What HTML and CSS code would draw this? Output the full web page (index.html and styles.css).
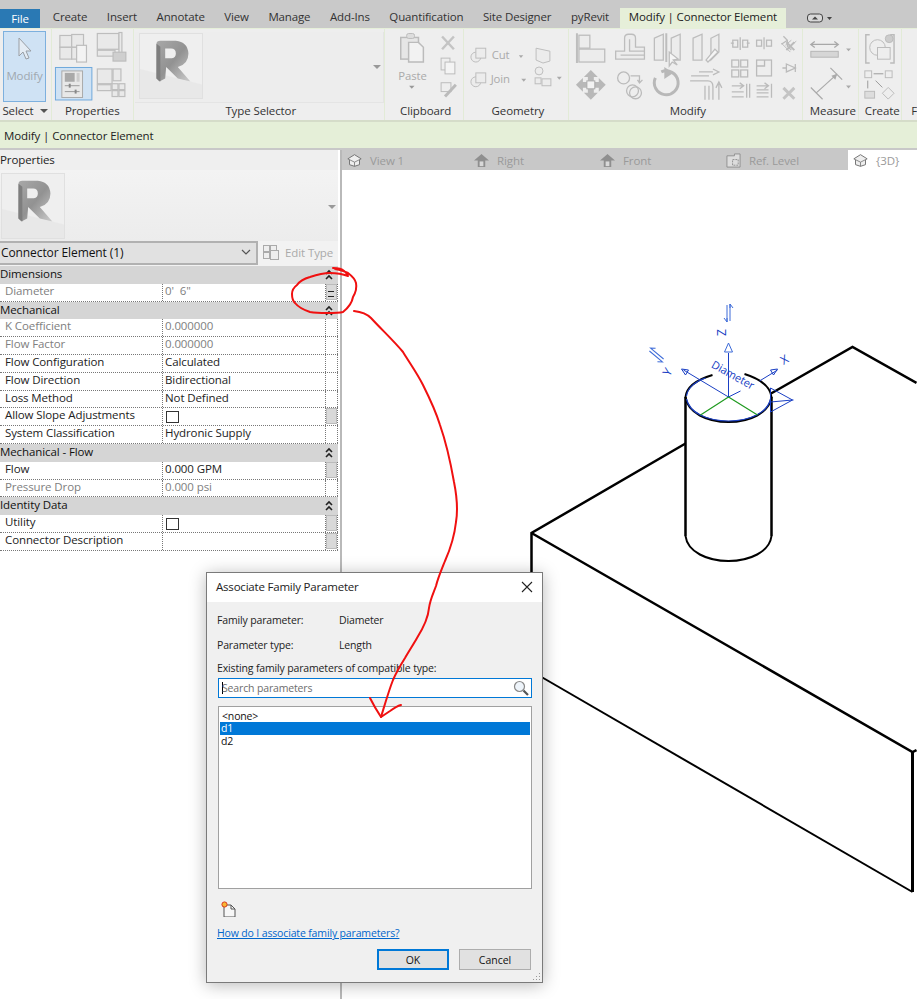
FILE: index.html
```html
<!DOCTYPE html>
<html lang="en">
<head>
<meta charset="utf-8">
<title>Modify | Connector Element</title>
<link rel="stylesheet" href="styles.css">
</head>
<body>
<svg class="defs" width="0" height="0" aria-hidden="true">
  <defs>
    <linearGradient id="rg" x1="0" y1="0" x2="1" y2="1">
      <stop offset="0" stop-color="#a8a8a8"/><stop offset=".5" stop-color="#929292"/><stop offset="1" stop-color="#cdcdcd"/>
    </linearGradient>
    <symbol id="rlogo" viewBox="0 0 64 66">
      <path d="M0 36 L64 52 V66 H0Z" fill="#e6e6e6" opacity=".7"/>
      <path fill="url(#rg)" fill-rule="evenodd" d="M17 10Q17 7 21 7H37Q49 8 50 20Q50 31 39 34L52 49L39 46L27 34L26 46L20 49L17 46ZM26 15V25H33Q37 24 37 20Q37 15 32 15Z"/>
      <path d="M17 10L21 13V49L17 46Z" fill="#7e7e7e"/>
    </symbol>
    <symbol id="chev" viewBox="0 0 10 12">
      <path d="M2 5L5 2L8 5M2 10L5 7L8 10" fill="none" stroke="#222" stroke-width="1.6"/>
    </symbol>
    <symbol id="home" viewBox="0 0 16 16">
      <path d="M0 8L8 1L16 8H12V15H4V8Z" fill="#8f8f8f"/><rect x="6" y="9" width="4" height="5" fill="#d8d8d8"/>
    </symbol>
    <symbol id="house3d" viewBox="0 0 18 16">
      <path d="M1 6L9 1L17 6L15 7V13L9 15L3 13V7Z" fill="#eee" stroke="#777" stroke-width="1.2"/><path d="M3 7L9 10L15 7M9 10V15" fill="none" stroke="#777"/>
    </symbol>
    <path id="dblarrow" d="M-9 -1.500H8M-8 1.500H9M-5 -4.500L-9 -1.500L-5 -1.500M5 1.500L9 1.500L5 4.500" fill="none"/>
  </defs>
</svg>

<div class="app">
  <nav class="tabs">
    <span class="tab-file">File</span>
    <span class="tab">Create</span>
    <span class="tab">Insert</span>
    <span class="tab">Annotate</span>
    <span class="tab">View</span>
    <span class="tab">Manage</span>
    <span class="tab">Add-Ins</span>
    <span class="tab">Quantification</span>
    <span class="tab">Site Designer</span>
    <span class="tab">pyRevit</span>
    <span class="tab-active">Modify | Connector Element</span>
    <svg class="tab-toggle" viewBox="0 0 26 10" width="26" height="10">
      <rect x=".5" y="1" width="15" height="8" rx="3" fill="#d8d8d8" stroke="#444"/><path d="M5 6.5L8 3.5L11 6.5Z" fill="#444"/><path d="M20 4H25L22.500 7Z" fill="#444"/>
    </svg>
  </nav>

  <section class="ribbon">
    <div class="panel panel-select">
      <div class="panel-body">
        <div class="modify-btn">
          <svg viewBox="0 0 16 24" width="16" height="24"><path d="M2 1V19L6 15L9 22L12 21L9 14H14Z" fill="#e4ecf4" stroke="#9a9fa5"/></svg>
          <span>Modify</span>
        </div>
      </div>
      <div class="panel-label">Select <i class="caret"></i></div>
    </div>

    <div class="panel panel-props">
      <div class="panel-body">
        <svg class="fill-svg" viewBox="52 29 82 74">
          <g fill="#e9e9e9" stroke="#bdbdbd" stroke-width="1.200">
            <rect x="60" y="35" width="12" height="12"/><rect x="72" y="34" width="12" height="13"/><rect x="60" y="47" width="12" height="12"/><rect x="72" y="47" width="9" height="12"/>
            <rect x="77" y="45" width="10" height="17" fill="#f3f3f3"/>
            <rect x="98" y="33" width="22" height="16"/><rect x="120" y="32" width="3" height="24"/><rect x="98" y="50" width="18" height="6"/><rect x="114" y="52" width="13" height="9" fill="#cfcfcf"/>
            <rect x="98" y="69" width="15" height="15"/><rect x="114" y="69" width="8" height="12"/><rect x="98" y="85" width="14" height="6"/>
            <rect x="113" y="84" width="6" height="6"/><rect x="120" y="84" width="6" height="6"/><rect x="113" y="91" width="6" height="6"/><rect x="120" y="91" width="6" height="6"/>
          </g>
          <rect x="55.500" y="67.500" width="37" height="33" fill="#cfe2f4" stroke="#6ea8dc"/>
          <rect x="62" y="71" width="21" height="27" fill="#e8e8e8" stroke="#aaa"/>
          <rect x="65" y="73" width="10" height="9" fill="#a9a9a9"/><rect x="77" y="73" width="3" height="9" fill="#ccc"/>
          <path d="M65 86H80M65 92H80" stroke="#9a9a9a"/><rect x="69" y="84" width="2" height="4" fill="#888"/><rect x="75" y="90" width="2" height="4" fill="#888"/>
        </svg>
      </div>
      <div class="panel-label">Properties</div>
    </div>

    <div class="panel panel-type">
      <div class="panel-body type-box">
        <svg class="rbox" viewBox="0 0 64 66"><use href="#rlogo"/></svg>
        <i class="caret caret-light"></i>
      </div>
      <div class="panel-label label-shift">Type Selector</div>
    </div>

    <div class="panel panel-clip">
      <div class="panel-body">
        <svg class="fill-svg" viewBox="386 29 79 74">
          <rect x="402" y="37" width="18" height="22" fill="#e6e6e6" stroke="#bbb" stroke-width="1.500"/>
          <rect x="408" y="33" width="8" height="5" rx="2" fill="#ddd" stroke="#bbb"/>
          <path d="M410 42H420L425 47V62H410Z" fill="#f2f2f2" stroke="#bbb" stroke-width="1.500"/>
          <text class="dim-text" x="414" y="80" text-anchor="middle">Paste</text>
          <path d="M410.500 86H416L413.200 89Z" fill="#999"/>
          <path d="M444 36L456 49M456 36L444 49" stroke="#c4c4c4" stroke-width="2.500"/>
          <rect x="443" y="58" width="9" height="12" fill="#eee" stroke="#bbb"/><rect x="447" y="62" width="10" height="12" fill="#f4f4f4" stroke="#bbb"/>
          <rect x="443" y="83" width="10" height="9" fill="#eee" stroke="#bbb"/><path d="M447 97L458 85" stroke="#bbb" stroke-width="3"/>
        </svg>
      </div>
      <div class="panel-label label-shift">Clipboard</div>
    </div>

    <div class="panel panel-geo">
      <div class="panel-body">
        <svg class="fill-svg" viewBox="465 29 106 74">
          <g fill="#ececec" stroke="#bdbdbd">
            <circle cx="477" cy="57" r="5"/><rect x="477" y="48" width="10" height="10"/>
            <path d="M538 48L552 51V61L545 63L538 60Z"/>
            <circle cx="477" cy="82" r="5"/><rect x="477" y="73" width="10" height="10"/>
            <circle cx="541" cy="71" r="4"/><rect x="537" y="78" width="6" height="6"/><rect x="544" y="79" width="9" height="7"/>
          </g>
          <text class="dim-text" x="493" y="59">Cut</text><text class="dim-text" x="492" y="83">Join</text>
          <path d="M520.500 55H525L522.700 58ZM523 79H528L525.500 82ZM559 77H564L561.500 80Z" fill="#aaa"/>
        </svg>
      </div>
      <div class="panel-label label-shift">Geometry</div>
    </div>

    <div class="panel panel-mod">
      <div class="panel-body">
        <svg class="fill-svg" viewBox="571 29 235 74">
          <g fill="#ececec" stroke="#bdbdbd" stroke-width="1.300">
            <path d="M579 33V63" stroke-width="2"/><rect x="581" y="35" width="11" height="13"/><rect x="581" y="49" width="26" height="13"/>
            <path d="M618 59V51H627V38Q627 34 631 34H634Q638 34 638 38V47H647V59Z"/><path d="M623 55H647M632 39V51H647" fill="none"/>
            <path d="M657 38L666 34V60H657ZM674 38L683 34V60H674Z"/>
            <path d="M696 38L705 34V60H696ZM714 38L722 34V52L714 60Z"/>
            <path d="M669 33V62" stroke-width="2"/><path d="M672 52V66L675 62L680 65L676 60L681 59Z" fill="#f5f5f5"/>
            <path d="M709 60L718 49L721 52L711 62Z" fill="#f5f5f5"/>
          </g>
          <g fill="#b8b8b8">
            <path d="M593 70L600 77H596V82H590V77H586Z"/><path d="M593 100L600 93H596V88H590V93H586Z"/>
            <path d="M578 85L585 78V82H590V88H585V92Z"/><path d="M608 85L601 78V82H596V88H601V92Z"/>
          </g>
          <rect x="589" y="81" width="8" height="8" fill="#f2f2f2" stroke="#aaa"/>
          <g fill="none" stroke="#bbb" stroke-width="1.300">
            <circle cx="626" cy="78" r="6"/><circle cx="635" cy="91" r="6"/><circle cx="638" cy="93" r="6"/>
            <path d="M633 76H642V82M640 80L642 83L645 80"/>
            <rect x="736" y="40" width="5" height="7"/><rect x="746" y="40" width="5" height="7"/><path d="M743.500 37V50M734 43H737M750 43H753"/>
            <rect x="760" y="40" width="5" height="6"/><rect x="770" y="40" width="5" height="6"/><path d="M767.500 37V49"/>
            <path d="M787 36L791 40V46L795 50M785 44L791 40"/>
            <rect x="735" y="60" width="7" height="7"/><rect x="744" y="60" width="7" height="7"/><rect x="735" y="70" width="7" height="7"/><rect x="744" y="70" width="7" height="7"/>
            <rect x="760" y="60" width="15" height="16"/><path d="M760 66H768V60"/>
            <path d="M786 68H790M790 64L799 68L790 72ZM799 64V72"/>
            <path d="M735 86H747M743 83L747 86L743 89M735 92H747M735 97H747M750 84V98M753 84V98"/>
            <path d="M760 86H772M768 83L772 86L768 89M760 90H772M760 93H772M760 97H772M775 84V98"/>
          </g>
          <path d="M664 72A12 12 0 1 1 658 78" fill="none" stroke="#b8b8b8" stroke-width="3"/>
          <path d="M667 67L676 73L667 79Z" fill="#b8b8b8"/>
          <path d="M694 76H712M702 72H716M716 69L722 72L716 75M693 81H711Q716 81 716 87V100M708 86V100M712 86V100" fill="none" stroke="#bbb" stroke-width="1.300"/>
          <path d="M722 100V84M719 88L722 82L725 88" fill="none" stroke="#bbb" stroke-width="1.300"/>
          <path d="M785 43L794 52M789 45L795 40M792 47L800 41" fill="none" stroke="#bbb"/>
          <path d="M790 50L798 58M798 50L790 58" transform="translate(0 -8)" stroke="#bbb" stroke-width="2"/>
          <path d="M787 88L798 99M798 88L787 99" stroke="#c4c4c4" stroke-width="3"/>
        </svg>
      </div>
      <div class="panel-label label-shift">Modify</div>
    </div>

    <div class="panel panel-measure">
      <div class="panel-body">
        <svg class="fill-svg" viewBox="806 29 56 74">
          <path d="M814 44H842M818 41L814 44L818 47M838 41L842 44L838 47" fill="none" stroke="#a8a8a8" stroke-width="1.300"/>
          <rect x="814" y="51" width="28" height="6" fill="#d6d6d6" stroke="#b5b5b5"/>
          <path d="M850 48H855L852.500 51ZM850 86H855L852.500 89Z" fill="#aaa"/>
          <path d="M819 94L841 74M814 88L826 100M834 68L846 80" fill="none" stroke="#aaa" stroke-width="1.200"/>
          <path d="M841 74L835 76L839 80Z" fill="#aaa"/>
        </svg>
      </div>
      <div class="panel-label label-shift">Measure</div>
    </div>

    <div class="panel panel-create">
      <div class="panel-body">
        <svg class="fill-svg" viewBox="862 29 43 74">
          <g fill="#eee" stroke="#bbb">
            <path d="M873 34H869V63H873M894 34H898V63H894" fill="none" stroke-width="1.500"/>
            <circle cx="881" cy="47" r="8"/><rect x="881" y="47" width="13" height="12"/>
            <circle cx="893" cy="38" r="4" fill="#ccc"/>
            <rect x="868" y="71" width="7" height="7"/><rect x="889" y="71" width="7" height="7"/>
            <rect x="868" y="92" width="10" height="7" fill="#ddd"/><path d="M892 88L898 94L892 100L886 94Z"/>
          </g>
          <path d="M877 74H887M871 81V89M879 81L886 88" fill="none" stroke="#999"/>
        </svg>
      </div>
      <div class="panel-label label-shift">Create</div>
    </div>
    <div class="panel panel-end"><div class="panel-body"></div><div class="panel-label">F</div></div>
  </section>

  <div class="contextbar">Modify | Connector Element</div>

  <main class="workspace">
    <aside class="props">
      <div class="props-title">Properties</div>
      <div class="props-preview">
        <svg class="rbox" viewBox="0 0 64 66"><use href="#rlogo"/></svg>
        <i class="caret caret-light"></i>
      </div>
      <div class="props-picker">
        <div class="picker">
          <span>Connector Element (1)</span>
          <svg viewBox="0 0 10 6" width="10" height="6"><path d="M1 1L5 5L9 1" fill="none" stroke="#555" stroke-width="1.200"/></svg>
        </div>
        <div class="edit-type">
          <svg viewBox="0 0 16 16" width="16" height="16"><g fill="#eee" stroke="#aaa"><rect x=".5" y="1.500" width="6" height="6"/><rect x="7.500" y="1.500" width="6" height="6"/><rect x=".5" y="8.500" width="6" height="6"/><rect x="7.500" y="6.500" width="8" height="9"/></g></svg>
          <span>Edit Type</span>
        </div>
      </div>
      <div class="grid">
        <div class="group">Dimensions<svg class="chev"><use href="#chev"/></svg></div>
        <div class="row dim"><span>Diameter</span><span>0'&nbsp; 6"</span><span class="cell-btn"><b class="btn btn-eq"></b></span></div>
        <div class="group">Mechanical<svg class="chev"><use href="#chev"/></svg></div>
        <div class="row dim"><span>K Coefficient</span><span>0.000000</span><span class="cell-btn"></span></div>
        <div class="row dim"><span>Flow Factor</span><span>0.000000</span><span class="cell-btn"></span></div>
        <div class="row"><span>Flow Configuration</span><span>Calculated</span><span class="cell-btn"></span></div>
        <div class="row"><span>Flow Direction</span><span>Bidirectional</span><span class="cell-btn"></span></div>
        <div class="row"><span>Loss Method</span><span>Not Defined</span><span class="cell-btn"></span></div>
        <div class="row"><span>Allow Slope Adjustments</span><span><i class="check"></i></span><span class="cell-btn"><b class="btn"></b></span></div>
        <div class="row"><span>System Classification</span><span>Hydronic Supply</span><span class="cell-btn"></span></div>
        <div class="group">Mechanical - Flow<svg class="chev"><use href="#chev"/></svg></div>
        <div class="row"><span>Flow</span><span>0.000 GPM</span><span class="cell-btn"><b class="btn"></b></span></div>
        <div class="row dim"><span>Pressure Drop</span><span>0.000 psi</span><span class="cell-btn"></span></div>
        <div class="group">Identity Data<svg class="chev"><use href="#chev"/></svg></div>
        <div class="row"><span>Utility</span><span><i class="check"></i></span><span class="cell-btn"><b class="btn"></b></span></div>
        <div class="row"><span>Connector Description</span><span></span><span class="cell-btn"><b class="btn"></b></span></div>
      </div>
    </aside>

    <div class="views">
      <div class="viewtabs">
        <span class="vt vt-1"><svg class="vt-icon"><use href="#house3d"/></svg>View 1</span>
        <span class="vt"><svg class="vt-icon"><use href="#home"/></svg>Right</span>
        <span class="vt"><svg class="vt-icon"><use href="#home"/></svg>Front</span>
        <span class="vt vt-ref"><svg class="vt-icon" viewBox="0 0 16 16"><path d="M1 3H9V1H15V15H1Z" fill="#ddd" stroke="#8f8f8f"/><path d="M7 7H13V13H7Z" fill="none" stroke="#8f8f8f" stroke-dasharray="2 1"/></svg>Ref. Level</span>
        <span class="vt vt-on"><svg class="vt-icon"><use href="#house3d"/></svg>{3D}</span>
      </div>
      <svg class="canvas" viewBox="343 170 574 829">
        <g fill="none" stroke="#000" stroke-width="2.500">
          <path d="M532 572V533L686 443.500M771.500 393.500L853 347L917 383"/>
          <path d="M532 533L913 752L917 750"/>
          <path d="M542 677L913 892" stroke-width="2"/>
          <path d="M913 752V892" stroke-width="3"/>
          <path d="M686 397V536M772 397V536"/>
          <path d="M686 536C688 552 708 561 729 561S770 552 772 536" stroke-width="2"/>
          <path d="M686 397C688 413 708 422 729 422S770 413 772 397C771 388 764 380 745 374M713 375C696 380 687 388 686 397" stroke-width="2"/>
        </g>
        <g fill="none" stroke="#1a3fc4">
          <path d="M687 399C690 413 708 421 729 421S768 413 771 399M687 396C688 388 696 381 706 378" stroke-width="1.200"/>
          <path d="M729 397L684 370M729 397V353M729 397L741 391M760 381L778 370M771 402L793 400L771 388V412L793 400H794"/>
          <path d="M729 343L725 352H733Z" stroke="#3d6bd8"/>
          <path d="M682 369L689 370L686 375ZM778 369L771 370L774 375Z"/>
          <use href="#dblarrow" transform="translate(729 313) rotate(90)" stroke="#3d6bd8"/>
          <use href="#dblarrow" transform="translate(657 355) rotate(40)" stroke="#3d6bd8"/>
        </g>
        <g fill="none" stroke="#1f9a1f" stroke-width="1.200"><path d="M729 397L701 415M729 397L758 415"/></g>
        <text class="gizmo" transform="translate(711 367) rotate(29)">Diameter</text>
        <text class="gizmo gizmo-big" transform="translate(726 336) rotate(-90)">Z</text>
        <text class="gizmo gizmo-big" transform="translate(670 377) rotate(-60)">Y</text>
        <text class="gizmo gizmo-big" transform="translate(784 365) rotate(-30)">X</text>
      </svg>
    </div>
  </main>

  <div class="dialog">
    <header class="dialog-title">
      <span>Associate Family Parameter</span>
      <svg viewBox="0 0 12 12" width="12" height="12"><path d="M1 1L11 11M11 1L1 11" stroke="#222" stroke-width="1.100"/></svg>
    </header>
    <div class="dialog-body">
      <div class="field"><span>Family parameter:</span><span>Diameter</span></div>
      <div class="field"><span>Parameter type:</span><span>Length</span></div>
      <div class="existing">Existing family parameters of compatible type:</div>
      <div class="search">
        <span><i class="text-caret"></i>Search parameters</span>
        <svg viewBox="0 0 16 16" width="16" height="16"><circle cx="6.500" cy="6.500" r="5" fill="#eef4fa" stroke="#888" stroke-width="1.200"/><path d="M10.500 10.500L15 15" stroke="#555" stroke-width="2.200"/></svg>
      </div>
      <ul class="list">
        <li>&lt;none&gt;</li>
        <li class="selected">d1</li>
        <li>d2</li>
      </ul>
      <svg class="new-param" viewBox="0 0 16 16" width="16" height="16">
        <path d="M3 4H10L14 8V16H3Z" fill="#f7f7f7" stroke="#555"/><path d="M10 4V8H14" fill="none" stroke="#555"/>
        <circle cx="3.500" cy="3.500" r="2.600" fill="#f7b733" stroke="#d9381e"/>
      </svg>
      <a class="help" href="#">How do I associate family parameters?</a>
      <div class="actions">
        <button class="ok" type="button">OK</button>
        <button type="button">Cancel</button>
      </div>
    </div>
    <svg class="grip" viewBox="0 0 9 9" width="9" height="9"><path d="M7 1H8V2H7ZM4 4H5V5H4ZM7 4H8V5H7ZM1 7H2V8H1ZM4 7H5V8H4ZM7 7H8V8H7Z" fill="#999"/></svg>
  </div>

  <svg class="markup" viewBox="0 0 917 999">
    <g fill="none" stroke="#f01010" stroke-width="2" stroke-linejoin="round" stroke-linecap="round">
      <path d="M333 268C338 268 342 269 344 271C346 272 347 274 348 276C340 273 335 273 330 273C322 273 316 275 310 277C303 279 299 282 297 285C293 288 292 291 292 294C292 298 293 301 295 303C299 308 304 310 310 312C316 313 321 313 327 313C333 313 339 313 343 312C348 308 352 303 353 297C356 292 357 288 356 283C355 279 352 276 348 273C344 271 340 270 335 269"/>
      <path d="M354 311C362 312 367 314 371 318C382 330 393 340 403 352C409 362 417 373 423 385C430 399 436 412 440 425C447 445 451 465 454 482C457 497 458 510 456 522C454 540 449 552 445 561C441 571 438 578 436 586C433 594 430 600 429 608C428 620 422 630 417 638C413 645 409 651 405 658C400 666 396 673 393 680C389 690 385 704 381 717"/>
      <path d="M370 698C373 704 377 711 381 717C384 715 387 713 390 711C394 708 397 706 401 705"/>
    </g>
  </svg>
</div>
</body>
</html>
```
FILE: styles.css
```css
* { box-sizing: border-box; }
html, body { margin: 0; padding: 0; }
body {
  width: 917px;
  height: 999px;
  overflow: hidden;
  background: #fff;
  font-family: "Open Sans", "Noto Sans", sans-serif;
  font-size: 11.5px;
  letter-spacing: -.1px;
  color: #222;
}
.defs { position: absolute; }
.app { position: relative; width: 917px; height: 999px; overflow: hidden; display: flex; flex-direction: column; }

/* tab strip */
.tabs { height: 28px; flex: none; background: #c9c9c9; display: flex; align-items: flex-end; letter-spacing: -.15px; }
.tab-file { width: 40px; height: 19px; margin-right: 3px; background: #2a79b4; color: #fff; display: flex; align-items: center; justify-content: center; }
.tab { height: 20px; padding: 0 9.8px; line-height: 17px; color: #333; }
.tab-active { height: 20px; margin-left: 1px; padding: 0 9px; line-height: 17px; background: #e6efd9; color: #222; }
.tab-toggle { margin: 0 0 5px 21px; }

/* ribbon */
.ribbon { height: 94px; flex: none; display: flex; background: #eee; border-bottom: 2px solid #d5dcc9; border-top: 1px solid #e6efd9; }
.panel { display: flex; flex-direction: column; border-right: 1px solid #e2ebd7; }
.panel-body { flex: 1; min-height: 0; position: relative; }
.panel-label { height: 17px; flex: none; text-align: center; line-height: 15px; color: #333; white-space: nowrap; overflow: hidden; }
.label-shift { padding-left: 4px; }
.panel-select { width: 52px; }
.panel-props { width: 82px; }
.panel-type { width: 252px; }
.panel-clip { width: 79px; }
.panel-geo { width: 106px; }
.panel-mod { width: 235px; }
.panel-measure { width: 56px; }
.panel-create { width: 43px; }
.panel-end { flex: 1; border-right: 0; }
.panel-end .panel-label { text-align: left; padding-left: 9px; }
.fill-svg { display: block; width: 100%; height: 100%; }
.dim-text { font-size: 11.5px; fill: #aaa; }

.modify-btn { position: absolute; left: 3px; top: 2px; width: 43px; height: 71px; background: #cfe2f4; border: 1px solid #7db0de; display: flex; flex-direction: column; align-items: center; color: #a0a8b0; }
.modify-btn svg { margin-top: 5px; }
.modify-btn span { margin-top: 7px; }

.caret { display: inline-block; width: 0; height: 0; margin-left: 4px; vertical-align: 2px; border: 4px solid transparent; border-top-color: #555; border-bottom: 0; }
.caret-light { position: absolute; right: 2px; top: 33px; border-top-color: #999; }

.type-box { margin: 3px 0 0 1px; background: #ededed; border: 1px solid #e4e4e4; border-width: 0 1px 1px 0; }
.type-box .rbox { position: absolute; left: 4px; top: 1px; }
.rbox { width: 64px; height: 66px; display: block; background: #efefef; border: 1px solid #e0e0e0; }

/* context bar */
.contextbar { height: 26px; flex: none; padding-left: 4px; line-height: 27px; background: #e5efd8; color: #222; }

/* workspace */
.workspace { flex: 1; display: flex; min-height: 0; border-top: 2px solid #c8c8c8; }
.props { width: 342px; flex: none; border-right: 2px solid #b9b9b9; background: #fff; display: flex; flex-direction: column; }
.props > * { width: 338px; }
.props-title { height: 20px; line-height: 20px; background: #efefef; }
.props-preview { height: 71px; position: relative; background: linear-gradient(#f3f3f3, #ececec); padding: 3px 0 0 1px; }
.props-preview .caret-light { top: 35px; }
.props-picker { height: 25px; display: flex; background: #f2f2f2; }
.picker { width: 258px; height: 24px; background: #e1e1e1; border: 2px solid #b1b1b1; border-left: 0; padding: 0 5px 2px 1px; display: flex; align-items: center; justify-content: space-between; font-size: 12px; color: #111; }
.edit-type { display: flex; align-items: center; gap: 6px; margin-left: 5px; padding-bottom: 3px; color: #aaa; }

.grid { flex: none; }
.group { height: 17.8px; background: #d5d5d5; line-height: 15px; padding-left: 0; position: relative; color: #111; }
.chev { position: absolute; right: 4px; top: 3px; width: 10px; height: 12px; }
.row { height: 17.8px; display: grid; grid-template-columns: 163px 163px 12px; border-bottom: 1px dotted #777; color: #222; }
.row > span { border-right: 1px dotted #777; line-height: 14px; padding-left: 2px; white-space: nowrap; position: relative; }
.row > span:first-child { padding-left: 5px; }
.row > .cell-btn { padding: 0; }
.row.dim { color: #808080; }
.check { display: block; width: 13px; height: 12px; margin: 3px 0 0 1px; border: 1px solid #333; background: #fff; }
.btn { display: block; height: 16px; background: #d9d9d9; border: 1px solid #bbb; }
.btn-eq { position: relative; }
.btn-eq::after { content: ""; position: absolute; left: 1px; right: 2px; top: 6px; height: 4px; border-top: 1px solid #222; border-bottom: 1px solid #222; }

/* views */
.views { flex: 1; min-width: 0; display: flex; flex-direction: column; }
.viewtabs { height: 20px; flex: none; padding-left: 5px; background: #c8c8c8; display: flex; color: #9a9a9a; }
.vt { width: 126px; flex: none; display: flex; align-items: center; gap: 8px; white-space: nowrap; }
.vt-1 { width: 127px; }
.vt-ref { width: 122px; }
.vt-on { flex: 1; width: auto; padding-left: 5px; background: #fff; }
.vt-icon { width: 15px; height: 15px; flex: none; }
.canvas { flex: 1; display: block; width: 100%; min-height: 0; }
.gizmo { font-size: 11px; fill: #1a3fc4; }
.gizmo-big { font-size: 12px; }

/* dialog */
.dialog { position: absolute; left: 206px; top: 572px; width: 337px; height: 411px; background: #f0f0f0; border: 1px solid #7a7a7a; box-shadow: 0 2px 16px rgba(0,0,0,.28); }
.dialog-title { height: 29px; background: #fff; display: flex; align-items: center; justify-content: space-between; padding: 0 9px 2px; font-size: 11.5px; letter-spacing: -.2px; }
.dialog-body { padding: 5px 10px 0; font-size: 10.5px; letter-spacing: -.15px; }
.field { display: grid; grid-template-columns: 122px 1fr; height: 25px; align-items: center; }
.existing { height: 21px; line-height: 22px; }
.search { width: 314px; height: 20px; margin-left: 1px; background: #fff; border: 1px solid #0078d7; display: flex; align-items: center; justify-content: space-between; padding: 0 2px 0 3px; color: #6d6d6d; }
.text-caret { display: inline-block; width: 1px; height: 12px; margin-right: -1px; vertical-align: -2px; background: #000; }
.list { width: 314px; height: 183px; margin: 8px 0 0 1px; padding: 3px 1px; list-style: none; background: #fff; border: 1px solid #a0a0a0; color: #111; }
.list li { height: 13px; line-height: 13px; padding-left: 1px; }
.list li:first-child { height: 12px; line-height: 12px; padding-left: 2px; }
.list li.selected { background: #0078d7; color: #fff; }
.new-param { display: block; margin: 12px 0 0 4px; }
.help { display: block; height: 18px; margin-top: 7px; line-height: 18px; color: #0066cc; }
.actions { display: flex; justify-content: flex-end; gap: 10px; margin: 7px 1px 0 0; }
.actions button { width: 72px; height: 21px; padding: 0; background: #e1e1e1; border: 1px solid #adadad; font: inherit; color: #111; }
.actions .ok { border: 2px solid #0078d7; }
.grip { position: absolute; right: 1px; bottom: 1px; }

/* red pen markup */
.markup { position: absolute; left: 0; top: 0; width: 917px; height: 999px; pointer-events: none; }
```
